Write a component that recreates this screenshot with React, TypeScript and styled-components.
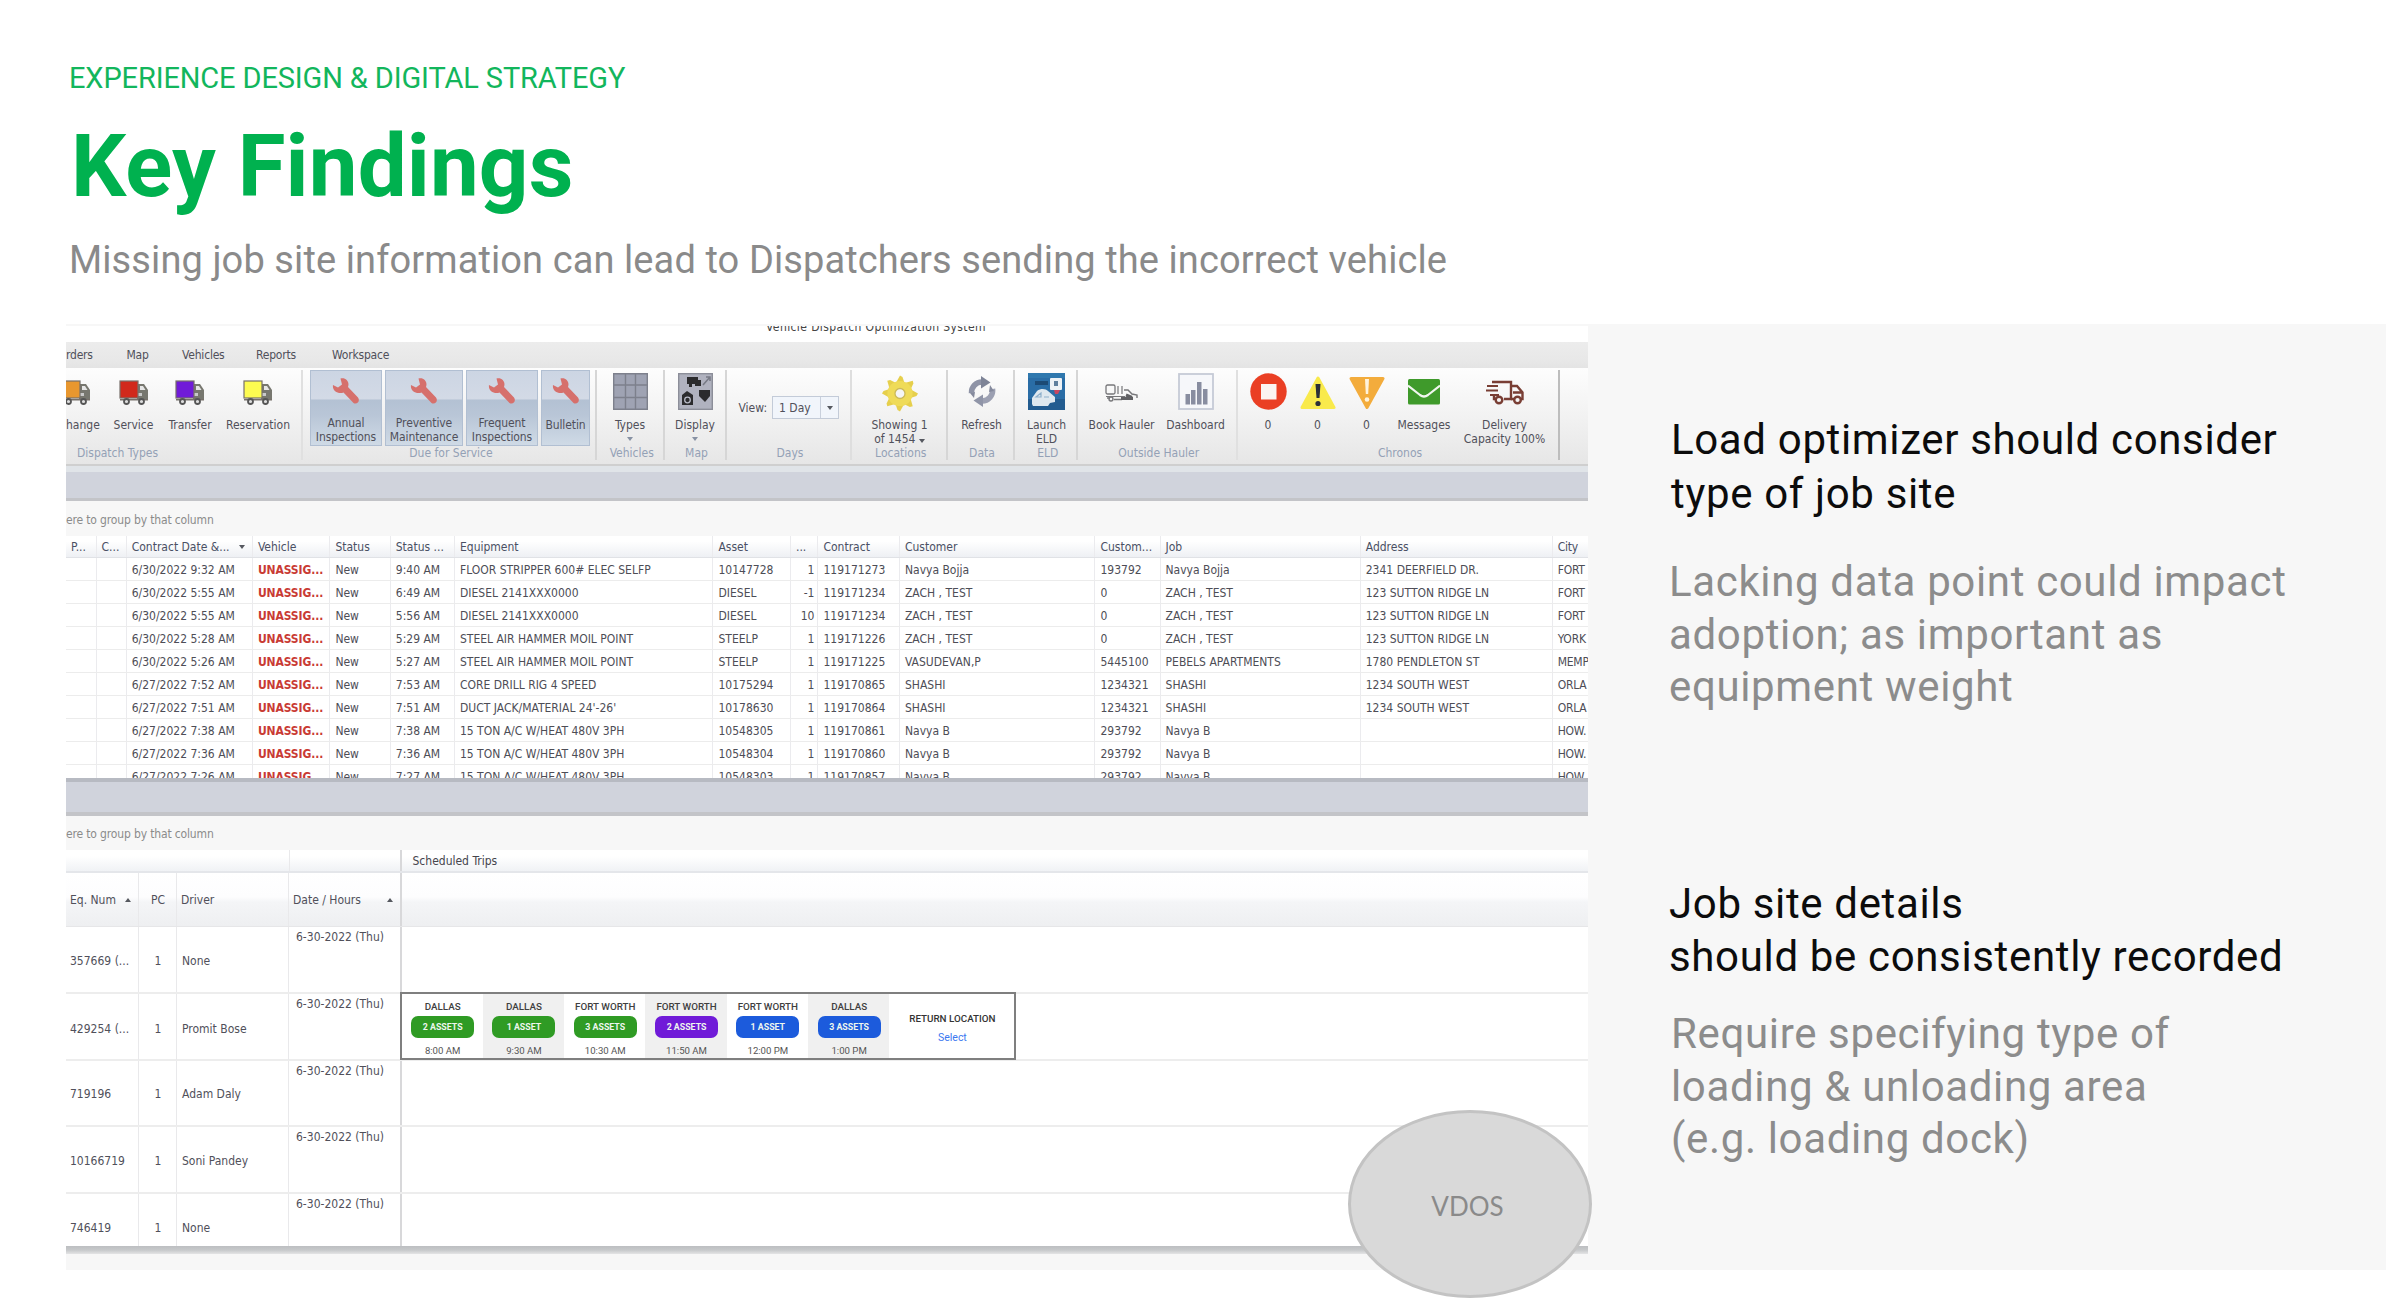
import React from "react";
import styled, { createGlobalStyle } from "styled-components";

const ui = `"DejaVu Sans Condensed", "DejaVu Sans", sans-serif`;
const brand = `Roboto, "Open Sans", sans-serif`;

const Global = createGlobalStyle`
  * { box-sizing: border-box; }
  body { margin: 0; background: #fff; overflow: hidden; }
`;

/* ---------- slide ---------- */

const Slide = styled.main`
  position: relative;
  width: 2386px;
  height: 1298px;
  overflow: hidden;
  background: #fff;
  font-family: ${brand};
`;

const Header = styled.header`
  display: flex;
  flex-direction: column;
  height: 324px;
  padding: 61px 0 0 69px;
  white-space: nowrap;
`;

const Eyebrow = styled.div`
  font-size: 29px;
  line-height: 34px;
  letter-spacing: -0.13px;
  color: #12b65c;
`;

const Title = styled.h1`
  margin: 21px 0 22px 2px;
  font-size: 87px;
  line-height: 100px;
  letter-spacing: 0.15px;
  font-weight: 700;
  color: #00b14f;
`;

const Subtitle = styled.div`
  font-size: 38px;
  line-height: 44px;
  letter-spacing: 0.1px;
  color: #8a8a8a;
`;

const Panel = styled.section`
  display: flex;
  height: 946px;
  margin-left: 66px;
  background: #f7f7f7;
`;

const Findings = styled.aside`
  flex: 1;
  display: flex;
  flex-direction: column;
  padding: 89px 0 0 81px;
  font-size: 42px;
  letter-spacing: 0.65px;
  white-space: nowrap;
`;

const Finding = styled.article<{ $line: number; $height: number; $indent?: number }>`
  display: flex;
  flex-direction: column;
  height: ${(p) => p.$height}px;
  h2 {
    margin: 0 0 0 ${(p) => p.$indent ?? 0}px;
    font-size: 42px;
    font-weight: 400;
    line-height: ${(p) => p.$line}px;
    color: #0c0c0c;
  }
`;

const Detail = styled.p<{ $gap: number; $indent?: number }>`
  margin: ${(p) => p.$gap}px 0 0 ${(p) => p.$indent ?? 0}px;
  line-height: 52.6px;
  color: #8c8c8c;
`;

const Badge = styled.div`
  position: absolute;
  left: 1348px;
  top: 1110px;
  width: 244px;
  height: 188px;
  padding: 4px 5px 0 0;
  display: flex;
  align-items: center;
  justify-content: center;
  border: 3px solid #c3c3c3;
  border-radius: 50%;
  background: #d9d9d9;
  color: #8a8a8a;
  font: 26px Lato, "Open Sans", sans-serif;
`;

/* ---------- dispatch application ---------- */

const AppWindow = styled.div`
  width: 1522px;
  height: 930px;
  padding-top: 2px;
  display: flex;
  flex-direction: column;
  overflow: hidden;
  font: 12px/14px ${ui};
  color: #50505a;
  white-space: nowrap;
`;

const TitleBar = styled.div`
  height: 16px;
  overflow: hidden;
  background: #fff;
  span {
    display: block;
    margin: -7px 0 0 700px;
    line-height: 16px;
    letter-spacing: 0.4px;
    color: #444;
  }
`;

const MenuBar = styled.nav`
  display: flex;
  align-items: center;
  height: 26px;
  background: linear-gradient(#ececec, #e8e8e8 70%, #e4e4e4);
`;

const MenuItem = styled.span<{ $w: number }>`
  width: ${(p) => p.$w}px;
  letter-spacing: -0.2px;
`;

const Ribbon = styled.div`
  display: flex;
  height: 98px;
  background: linear-gradient(#fdfdfd, #f2f2f2 50%, #e6e6e6);
  border-bottom: 2px solid #cfcfcf;
`;

const Group = styled.div<{ $w: number; $line?: string }>`
  width: ${(p) => p.$w}px;
  height: 90px;
  margin-top: 2px;
  display: flex;
  flex-direction: column;
  border-right: 2px solid ${(p) => p.$line ?? "#d6d6d6"};
`;

const Items = styled.div<{ $pad?: number; $gap?: number }>`
  display: flex;
  height: 77px;
  padding-left: ${(p) => p.$pad ?? 0}px;
  gap: ${(p) => p.$gap ?? 0}px;
`;

const GroupLabel = styled.div<{ $w?: number; $pad?: number }>`
  width: ${(p) => (p.$w ? p.$w + "px" : "100%")};
  padding-left: ${(p) => p.$pad ?? 0}px;
  text-align: center;
  line-height: 13px;
  color: #94a1b6;
`;

const Item = styled.div<{ $w: number; $align?: string }>`
  flex: none;
  width: ${(p) => p.$w}px;
  display: flex;
  flex-direction: column;
  align-items: ${(p) => p.$align ?? "center"};
  line-height: 14.7px;
  text-align: center;
`;

const Tile = styled(Item)`
  height: 76px;
  letter-spacing: -0.1px;
  background: linear-gradient(#ccd5e3, #d3dae6 38%, #b3c1d3 39%, #b9c6d7 60%, #cfdae6);
  border: 1.5px solid #b1bfd2;
`;

const IconSlot = styled.div<{ $border?: boolean }>`
  height: ${(p) => (p.$border ? 46.5 : 48)}px;
  display: flex;
  align-items: flex-start;
  svg {
    display: block;
  }
`;

const Caret = styled.i<{ $up?: boolean }>`
  display: inline-block;
  width: 0;
  height: 0;
  border: 3px solid transparent;
  ${(p) => (p.$up ? "border-bottom" : "border-top")}: 4px solid #55585f;
  ${(p) => (p.$up ? "border-top" : "border-bottom")}: 0;
`;

const ToolCaret = styled(Caret)`
  margin-top: 4px;
  border-top-color: #8791a3;
`;

const ViewPicker = styled.label`
  display: flex;
  align-items: center;
  height: 23px;
  margin: 26px 0 0 12px;
  gap: 5px;
`;

const Select = styled.span`
  display: grid;
  grid-template-columns: 47px 19px;
  width: 67px;
  height: 23px;
  align-items: center;
  background: #f1f5fb;
  border: 1px solid #c3cbd8;
  b {
    font-weight: 400;
    padding-left: 6px;
  }
  em {
    height: 21px;
    display: grid;
    place-items: center;
    border-left: 1px solid #c9d0dc;
  }
`;

const Shade = styled.div`
  height: 6px;
  background: #e0e4e8;
`;

const Band = styled.div<{ $h: number; $top?: number; $bottom: number }>`
  height: ${(p) => p.$h}px;
  flex: none;
  background: #d0d3dc;
  border-top: ${(p) => p.$top ?? 0}px solid #b7bac2;
  border-bottom: ${(p) => p.$bottom}px solid #c3c4c8;
`;

const GroupHint = styled.div<{ $h: number; $pb: number }>`
  flex: none;
  display: flex;
  align-items: flex-end;
  height: ${(p) => p.$h}px;
  padding-bottom: ${(p) => p.$pb}px;
  letter-spacing: -0.15px;
  color: #8b8b8b;
`;

/* ---------- orders grid ---------- */

const OrderGrid = styled.div`
  flex: none;
  height: 242px;
  overflow: hidden;
  background: #fff;
`;

const orderCols =
  "30.5px 30.2px 126.2px 77.5px 60.4px 64.2px 258.5px 77.5px 27.5px 81.5px 195.5px 65.1px 200.2px 191.9px 35.3px";

const OrderRow = styled.div<{ $head?: boolean }>`
  display: grid;
  grid-template-columns: ${orderCols};
  height: ${(p) => (p.$head ? 22 : 23.05)}px;
  border-bottom: 1.5px solid ${(p) => (p.$head ? "#e0e2e6" : "#ececec")};
  background: ${(p) => (p.$head ? "linear-gradient(#fff 25%, #eef0f4)" : "#fff")};
  color: ${(p) => (p.$head ? "#4a5064" : "#4d4d56")};
`;

const Cell = styled.div<{ $right?: boolean; $alert?: boolean }>`
  display: flex;
  align-items: center;
  justify-content: ${(p) => (p.$right ? "flex-end" : "flex-start")};
  padding: 1px 3px 0 5px;
  overflow: hidden;
  border-right: 1.5px solid #ebebee;
  ${(p) => p.$alert && "color: #c93a34; font-weight: 700; letter-spacing: -0.1px;"}
  ${Caret} {
    margin: 0 4px 0 auto;
  }
  &:last-child {
    padding-right: 0;
    border-right: 0;
    letter-spacing: -0.2px;
  }
`;

/* ---------- schedule grid ---------- */

const Schedule = styled.div`
  flex: none;
  height: 396px;
  overflow: hidden;
  background: #fff;
`;

const TopHead = styled.div`
  display: grid;
  grid-template-columns: 223.5px 112px 1fr;
  height: 23px;
  border-bottom: 2px solid #e4e6ea;
  background: linear-gradient(#fff 30%, #f0f2f5);
  color: #45454d;
`;

const schedCols = "73px 38px 112px 112.5px 1fr";

const SchedHead = styled.div`
  display: grid;
  grid-template-columns: ${schedCols};
  height: 54px;
  border-bottom: 1.5px solid #e6e6e8;
  background: linear-gradient(#fff, #fdfdfe 45%, #f4f5f7 55%, #eeeff1);
`;

const SchedRow = styled.div`
  display: grid;
  grid-template-columns: ${schedCols};
  height: 66.75px;
  border-bottom: 2px solid #ededed;
`;

const SCell = styled.div<{ $center?: boolean; $strong?: boolean; $pl?: number }>`
  display: flex;
  align-items: center;
  justify-content: ${(p) => (p.$center ? "center" : "flex-start")};
  padding: 3px 3px 0 ${(p) => p.$pl ?? 4}px;
  border-right: ${(p) => (p.$strong ? "2.5px solid #d8d8da" : "1.5px solid #e9e9eb")};
  ${Caret} {
    margin: 0 4px 0 auto;
  }
`;

const HeadCell = styled(SCell)`
  padding-top: 0;
`;

const LabelCell = styled(SCell)`
  padding-top: 1px;
  border-right: 0;
`;

const DateCell = styled(SCell)`
  align-items: flex-start;
  padding: 3px 0 0 7px;
`;

const Trips = styled.div`
  display: grid;
  grid-template-columns: repeat(6, 81.3px) 1fr;
  width: 616px;
  height: 68px;
  margin: -1.5px 0 0 -2px;
  border: 2.5px solid #7f7f7f;
  background: #fff;
  position: relative;
`;

const Stop = styled.div<{ $shade?: boolean }>`
  display: flex;
  flex-direction: column;
  align-items: center;
  padding: 7px 0 0 1px;
  background: ${(p) => (p.$shade ? "#f0f0f0" : "#fff")};
  font: 500 9.8px/12px ${brand};
  color: #3f3f3f;
  small {
    font: 9.6px/12px ${brand};
    margin-top: 7px;
    color: #555;
  }
`;

const Pill = styled.span<{ $c: string }>`
  display: grid;
  place-items: center;
  width: 63px;
  height: 22px;
  margin-top: 3px;
  border-radius: 7px;
  background: ${(p) => p.$c};
  color: #eef6ee;
  font: 700 8.8px/12px ${brand};
`;

const Return = styled.div`
  display: flex;
  flex-direction: column;
  align-items: center;
  justify-content: center;
  gap: 7px;
  padding: 4px 0 0 2px;
  font: 500 9.8px/12px ${brand};
  color: #333;
  a {
    color: #3b78f0;
    font-weight: 400;
    font-size: 10.5px;
  }
`;

const Floor = styled.div`
  flex: none;
  height: 8px;
  background: linear-gradient(#bcbec1, #c6c8ca 50%, #e4e4e5);
`;

/* ---------- icons ---------- */

const Truck = ({ c, cut }: { c: string; cut?: boolean }) => (
  <svg width={cut ? 25 : 30} height="26" viewBox={cut ? "5 0 25 26" : "0 0 30 26"}>
    <path d="M18 4h7l4 6v9H18z" fill="#77776f" />
    <path d="M21 6h3l2.500 4H21z" fill="#e6e6e6" />
    <path d="M19 13h4v3h-4z" fill="#c9c9c9" />
    <rect x="1" y="1" width="18" height="17" fill={c} stroke="#77706a" strokeWidth="1.200" />
    <path d="M1 19h28v1.500H1z" fill="#77706a" />
    <circle cx="7.500" cy="21.500" r="2.500" fill="#ddd" stroke="#555" strokeWidth="1.800" />
    <circle cx="22.500" cy="21.500" r="2.500" fill="#ddd" stroke="#555" strokeWidth="1.800" />
  </svg>
);

const Wrench = () => (
  <svg width="28" height="28" viewBox="0 0 28 28">
    <path
      d="M1 8 L6 10.500 L10 7.500 L8.500 1.500 C13.500 0 18 4.500 16 10 L26 20.500 C28.500 24 25 28 21.500 26 L11.500 15.500 C6 17.500 0 13.500 1 8Z"
      fill="#d6706c"
    />
  </svg>
);

const TypesIcon = () => (
  <svg width="35" height="37" viewBox="0 0 35 37">
    <rect width="35" height="37" fill="#9fa3b3" />
    <path d="M0.700 .7h33.600v35.600H.7zM12.500 0v37M22.500 0v37M0 12h35M0 24.500h35" fill="none" stroke="#7d808c" strokeWidth="1.400" />
  </svg>
);

const DisplayIcon = () => (
  <svg width="35" height="37" viewBox="0 0 35 37">
    <rect x=".7" y=".7" width="33.600" height="35.600" fill="#b0b2bf" stroke="#8c8e99" strokeWidth="1.400" />
    <path d="M9 4h11v3h3v6h-6v-2h-3v3h-3v-3H9z" fill="#2b2b2d" />
    <path d="M25 12l7-8M28 4h4v4" stroke="#777a85" strokeWidth="1.500" fill="none" />
    <path d="M4 22l5-4 6 4v10H4z" fill="#2b2b2d" />
    <circle cx="9.500" cy="27" r="2.800" fill="none" stroke="#b8bac6" strokeWidth="1.300" />
    <path d="M21 17h11v6l-5 6-6-6z" fill="#2b2b2d" />
  </svg>
);

const Gear = () => (
  <svg width="36" height="37" viewBox="-18 -18.500 36 37">
    {[0, 45, 90, 135, 180, 225, 270, 315].map((a) => (
      <path key={a} d="M-5 -9L0 -18 2.500 -16.500 5 -9z" fill="#e6cf4c" transform={`rotate(${a})`} />
    ))}
    <circle r="12.600" fill="#efdb58" />
    <circle r="5" fill="#f5f5f5" stroke="#cbb95a" strokeWidth="1.300" />
  </svg>
);

const Refresh = () => (
  <svg width="28" height="31" viewBox="0 0 28 31">
    <path d="M3.500 17A10.500 10.500 0 0 1 14 6" fill="none" stroke="#8e93a6" strokeWidth="5.500" />
    <path d="M13 0l9.500 6.500L13 12.500z" fill="#7e8497" />
    <path d="M24.500 13A10.500 10.500 0 0 1 14 25" fill="none" stroke="#9ca0b2" strokeWidth="5.500" />
    <path d="M15 18.500L5.500 24.500 15 31z" fill="#9095a8" />
    <path d="M22 9l4 6-5 1zM6 22l-4-5 5-1z" fill="#858a9d" />
  </svg>
);

const LaunchIcon = () => (
  <svg width="37" height="37" viewBox="0 0 37 37">
    <rect width="37" height="37" fill="#2a6da6" />
    <path d="M0 0h37v5H0z" fill="#2f78ae" />
    <path d="M0 26h37v11H0z" fill="#235c90" />
    <path d="M7 8h13v4H7z" fill="#1c4a75" />
    <rect x="22" y="5" width="12" height="12" rx="1" fill="#edf2f6" />
    <path d="M26 8h4v5h-4z" fill="#5e7f9d" />
    <path d="M26 17h6l-2 4h-3z" fill="#c64762" />
    <path d="M4 31v-6l5-7c4-3 9-2 11 0l7 6v5l-5 1-2 3H5z" fill="#dfe8ef" />
    <path d="M8 24h5v-4zM16 24h5" stroke="#8fb0cb" strokeWidth="1.200" fill="none" />
  </svg>
);

const HaulerIcon = () => (
  <svg width="33" height="18" viewBox="0 0 33 18" fill="none" stroke="#77777a">
    <rect x="1" y="1" width="9" height="9" rx="1.500" strokeWidth="1.300" />
    <path d="M13 2v8M17 2v8M1 12.500h19" strokeWidth="1.200" />
    <path d="M19 6h4l4 4 5 1v3" strokeWidth="1.400" />
    <path d="M2 14h3M9 15.500h8" strokeWidth="1.300" />
    <circle cx="6" cy="15" r="2" strokeWidth="1.400" />
    <path d="M16 14.500h12M21 11l6 2.500" strokeWidth="3" stroke="#5f5f62" />
  </svg>
);

const DashboardIcon = () => (
  <svg width="36" height="37" viewBox="0 0 36 37">
    <rect x="1" y="1" width="34" height="35" fill="#f6f7fa" stroke="#c6cad6" strokeWidth="1.800" />
    <path d="M7.500 21h4.500v10.500H7.500zM13 17h4.500v14.500H13zM19 9h4.500v22.500H19zM25 16h4.500v15.500H25z" fill="#888da0" />
  </svg>
);

const StopIcon = () => (
  <svg width="37" height="37" viewBox="0 0 37 37">
    <circle cx="18.500" cy="18.500" r="18.200" fill="#ea3f24" />
    <rect x="11" y="11" width="15.500" height="15.500" fill="#fbf4f2" />
  </svg>
);

const WarnIcon = () => (
  <svg width="36" height="34" viewBox="0 0 36 34">
    <path d="M18 2L34 31.500H2z" fill="#f9ea4c" stroke="#f9ea4c" strokeWidth="3" strokeLinejoin="round" />
    <path d="M15.500 8h5l-1 14h-3z" fill="#2b2f38" />
    <circle cx="18" cy="27.500" r="2.600" fill="#2b2f38" />
  </svg>
);

const DownIcon = () => (
  <svg width="36" height="34" viewBox="0 0 36 34">
    <path d="M18 31.500L34 2.500H2z" fill="#f3ac3c" stroke="#f3ac3c" strokeWidth="3" strokeLinejoin="round" />
    <path d="M16 3h4l-.8 15h-2.400z" fill="#fff3dc" />
    <circle cx="18" cy="23.500" r="2.300" fill="#fff3dc" />
  </svg>
);

const MailIcon = () => (
  <svg width="32" height="26" viewBox="0 0 32 26">
    <rect width="32" height="25.500" rx="1.500" fill="#3f9a2b" />
    <path d="M0 6.500L12 16q4 3 8 0L32 6.500" fill="none" stroke="#f1f6ef" strokeWidth="2.200" />
  </svg>
);

const DeliveryIcon = () => (
  <svg width="38" height="25" viewBox="0 0 38 25" fill="none" stroke="#793e34" strokeWidth="2.400">
    <path d="M6 2h19v17H18M10 19H8v-4" />
    <path d="M1 6h11M0 10.500h12M4 15h9" strokeWidth="2.200" />
    <path d="M26 6h5l5.500 6.500V19H35M29 19h-4M27 12.500h9" />
    <circle cx="13" cy="20" r="3.300" />
    <circle cx="31.500" cy="20" r="3.300" />
  </svg>
);

/* ---------- data ---------- */

const orderHead = ["P...", "C...", "Contract Date &...", "Vehicle", "Status", "Status ...", "Equipment", "Asset", "...", "Contract", "Customer", "Custom...", "Job", "Address", "City"];

const orders: string[][] = [
  ["6/30/2022 9:32 AM", "9:40 AM", "FLOOR STRIPPER 600# ELEC SELFP", "10147728", "1", "119171273", "Navya Bojja", "193792", "Navya Bojja", "2341 DEERFIELD DR.", "FORT"],
  ["6/30/2022 5:55 AM", "6:49 AM", "DIESEL 2141XXX0000", "DIESEL", "-1", "119171234", "ZACH , TEST", "0", "ZACH , TEST", "123 SUTTON RIDGE LN", "FORT"],
  ["6/30/2022 5:55 AM", "5:56 AM", "DIESEL 2141XXX0000", "DIESEL", "10", "119171234", "ZACH , TEST", "0", "ZACH , TEST", "123 SUTTON RIDGE LN", "FORT"],
  ["6/30/2022 5:28 AM", "5:29 AM", "STEEL AIR HAMMER MOIL POINT", "STEELP", "1", "119171226", "ZACH , TEST", "0", "ZACH , TEST", "123 SUTTON RIDGE LN", "YORK"],
  ["6/30/2022 5:26 AM", "5:27 AM", "STEEL AIR HAMMER MOIL POINT", "STEELP", "1", "119171225", "VASUDEVAN,P", "5445100", "PEBELS APARTMENTS", "1780 PENDLETON ST", "MEMP"],
  ["6/27/2022 7:52 AM", "7:53 AM", "CORE DRILL RIG 4 SPEED", "10175294", "1", "119170865", "SHASHI", "1234321", "SHASHI", "1234 SOUTH WEST", "ORLA"],
  ["6/27/2022 7:51 AM", "7:51 AM", "DUCT JACK/MATERIAL 24'-26'", "10178630", "1", "119170864", "SHASHI", "1234321", "SHASHI", "1234 SOUTH WEST", "ORLA"],
  ["6/27/2022 7:38 AM", "7:38 AM", "15 TON A/C W/HEAT 480V 3PH", "10548305", "1", "119170861", "Navya B", "293792", "Navya B", "", "HOW."],
  ["6/27/2022 7:36 AM", "7:36 AM", "15 TON A/C W/HEAT 480V 3PH", "10548304", "1", "119170860", "Navya B", "293792", "Navya B", "", "HOW."],
  ["6/27/2022 7:26 AM", "7:27 AM", "15 TON A/C W/HEAT 480V 3PH", "10548303", "1", "119170857", "Navya B", "293792", "Navya B", "", "HOW."],
];

const drivers = [
  ["357669 (...", "None"],
  ["429254 (...", "Promit Bose"],
  ["719196", "Adam Daly"],
  ["10166719", "Soni Pandey"],
  ["746419", "None"],
];

const stops = [
  ["DALLAS", "2 ASSETS", "8:00 AM", "#2f9b24"],
  ["DALLAS", "1 ASSET", "9:30 AM", "#2f9b24"],
  ["FORT WORTH", "3 ASSETS", "10:30 AM", "#2f9b24"],
  ["FORT WORTH", "2 ASSETS", "11:50 AM", "#701bd8"],
  ["FORT WORTH", "1 ASSET", "12:00 PM", "#1c5bdc"],
  ["DALLAS", "3 ASSETS", "1:00 PM", "#1c5bdc"],
];

type ToolProps = { w: number; top: number; icon: React.ReactNode; children: React.ReactNode; align?: string };

const Spacer = styled.div<{ $top: number }>`
  padding-top: ${(p) => p.$top}px;
`;

const Tool = ({ w, top, icon, children, align }: ToolProps) => (
  <Item $w={w} $align={align}>
    <IconSlot>
      <Spacer $top={top}>{icon}</Spacer>
    </IconSlot>
    {children}
  </Item>
);

const ServiceTile = ({ w, children }: { w: number; children: React.ReactNode }) => (
  <Tile $w={w}>
    <IconSlot $border>
      <Spacer $top={6}>
        <Wrench />
      </Spacer>
    </IconSlot>
    {children}
  </Tile>
);

const RibbonBar = () => (
  <Ribbon>
    <Group $w={237} $line="#e0e0e0">
      <Items>
        <Tool w={35} top={10} icon={<Truck c="#e8972f" cut />} align="flex-start">hange</Tool>
        <Tool w={65} top={10} icon={<Truck c="#d1291c" />}>Service</Tool>
        <Tool w={48} top={10} icon={<Truck c="#701bd8" />}>Transfer</Tool>
        <Tool w={88} top={10} icon={<Truck c="#fdfb50" />}>Reservation</Tool>
      </Items>
      <GroupLabel $w={103}>Dispatch Types</GroupLabel>
    </Group>
    <Group $w={294}>
      <Items $pad={7} $gap={3}>
        <ServiceTile w={72}>Annual<br />Inspections</ServiceTile>
        <ServiceTile w={78}>Preventive<br />Maintenance</ServiceTile>
        <ServiceTile w={72}>Frequent<br />Inspections</ServiceTile>
        <ServiceTile w={49}>Bulletin</ServiceTile>
      </Items>
      <GroupLabel $pad={4}>Due for Service</GroupLabel>
    </Group>
    <Group $w={67.500}>
      <Items>
        <Tool w={66} top={3} icon={<TypesIcon />}>Types<ToolCaret /></Tool>
      </Items>
      <GroupLabel $pad={4}>Vehicles</GroupLabel>
    </Group>
    <Group $w={62}>
      <Items>
        <Tool w={61} top={3} icon={<DisplayIcon />}>Display<ToolCaret /></Tool>
      </Items>
      <GroupLabel $pad={4}>Map</GroupLabel>
    </Group>
    <Group $w={125} $line="#dedede">
      <Items>
        <ViewPicker>
          View:
          <Select>
            <b>1 Day</b>
            <em><Caret /></em>
          </Select>
        </ViewPicker>
      </Items>
      <GroupLabel $pad={4}>Days</GroupLabel>
    </Group>
    <Group $w={96.500}>
      <Items>
        <Tool w={96} top={5} icon={<Gear />}>
          <span>Showing 1<br />of 1454 <Caret /></span>
        </Tool>
      </Items>
      <GroupLabel $pad={4}>Locations</GroupLabel>
    </Group>
    <Group $w={67}>
      <Items>
        <Tool w={67} top={6} icon={<Refresh />}>Refresh</Tool>
      </Items>
      <GroupLabel $pad={3}>Data</GroupLabel>
    </Group>
    <Group $w={62.500}>
      <Items>
        <Tool w={63} top={3} icon={<LaunchIcon />}>Launch<br />ELD</Tool>
      </Items>
      <GroupLabel $pad={5}>ELD</GroupLabel>
    </Group>
    <Group $w={160.500} $line="#e0e0e0">
      <Items>
        <Tool w={88} top={14} icon={<HaulerIcon />}>Book Hauler</Tool>
        <Tool w={60} top={3} icon={<DashboardIcon />}>Dashboard</Tool>
      </Items>
      <GroupLabel $pad={4}>Outside Hauler</GroupLabel>
    </Group>
    <Group $w={322} $line="#bdbdbd">
      <Items $pad={5}>
        <Tool w={50} top={3} icon={<StopIcon />}>0</Tool>
        <Tool w={49} top={6} icon={<WarnIcon />}>0</Tool>
        <Tool w={49} top={6} icon={<DownIcon />}>0</Tool>
        <Tool w={66} top={9} icon={<MailIcon />}>Messages</Tool>
        <Tool w={95} top={10} icon={<DeliveryIcon />}>Delivery<br />Capacity 100%</Tool>
      </Items>
      <GroupLabel $pad={4}>Chronos</GroupLabel>
    </Group>
  </Ribbon>
);

const OrdersTable = () => (
  <OrderGrid>
    <OrderRow $head>
      {orderHead.map((h, i) => (
        <Cell key={i}>
          {h}
          {i === 2 && <Caret />}
        </Cell>
      ))}
    </OrderRow>
    {orders.map((o, r) => (
      <OrderRow key={r}>
        <Cell />
        <Cell />
        <Cell>{o[0]}</Cell>
        <Cell $alert>UNASSIG...</Cell>
        <Cell>New</Cell>
        {o.slice(1).map((v, i) => (
          <Cell key={i} $right={i === 3}>{v}</Cell>
        ))}
      </OrderRow>
    ))}
  </OrderGrid>
);

const TripStrip = () => (
  <Trips>
    {stops.map(([city, count, time, color], i) => (
      <Stop key={i} $shade={i % 2 === 1}>
        {city}
        <Pill $c={color}>{count}</Pill>
        <small>{time}</small>
      </Stop>
    ))}
    <Return>
      RETURN LOCATION
      <a>Select</a>
    </Return>
  </Trips>
);

const ScheduleTable = () => (
  <Schedule>
    <TopHead>
      <HeadCell />
      <HeadCell $strong />
      <LabelCell $pl={11}>Scheduled Trips</LabelCell>
    </TopHead>
    <SchedHead>
      <HeadCell>Eq. Num<Caret $up /></HeadCell>
      <HeadCell $center>PC</HeadCell>
      <HeadCell>Driver</HeadCell>
      <HeadCell $strong>Date / Hours<Caret $up /></HeadCell>
      <div />
    </SchedHead>
    {drivers.map(([num, name], i) => (
      <SchedRow key={i}>
        <SCell>{num}</SCell>
        <SCell $center>1</SCell>
        <SCell $pl={5}>{name}</SCell>
        <DateCell $strong>6-30-2022 (Thu)</DateCell>
        <div>{i === 1 && <TripStrip />}</div>
      </SchedRow>
    ))}
  </Schedule>
);

export default function App() {
  return (
    <Slide>
      <Global />
      <Header>
        <Eyebrow>EXPERIENCE DESIGN &amp; DIGITAL STRATEGY</Eyebrow>
        <Title>Key Findings</Title>
        <Subtitle>Missing job site information can lead to Dispatchers sending the incorrect vehicle</Subtitle>
      </Header>
      <Panel>
        <AppWindow>
          <TitleBar><span>Vehicle Dispatch Optimization System</span></TitleBar>
          <MenuBar>
            <MenuItem $w={60.500}>rders</MenuItem>
            <MenuItem $w={55.500}>Map</MenuItem>
            <MenuItem $w={74}>Vehicles</MenuItem>
            <MenuItem $w={76}>Reports</MenuItem>
            <MenuItem $w={80}>Workspace</MenuItem>
          </MenuBar>
          <RibbonBar />
          <Shade />
          <Band $h={29} $bottom={3} />
          <GroupHint $h={35} $pb={9}>ere to group by that column</GroupHint>
          <OrdersTable />
          <Band $h={38} $top={4} $bottom={4} />
          <GroupHint $h={34} $pb={9}>ere to group by that column</GroupHint>
          <ScheduleTable />
          <Floor />
        </AppWindow>
        <Findings>
          <Finding $line={54} $height={464} $indent={2}>
            <h2>Load optimizer should consider<br />type of job site</h2>
            <Detail $gap={35}>
              Lacking data point could impact<br />adoption; as important as<br />equipment weight
            </Detail>
          </Finding>
          <Finding $line={53} $height={320}>
            <h2>Job site details<br />should be consistently recorded</h2>
            <Detail $gap={25} $indent={2}>
              Require specifying type of<br />loading &amp; unloading area<br />(e.g. loading dock)
            </Detail>
          </Finding>
        </Findings>
      </Panel>
      <Badge>VDOS</Badge>
    </Slide>
  );
}
